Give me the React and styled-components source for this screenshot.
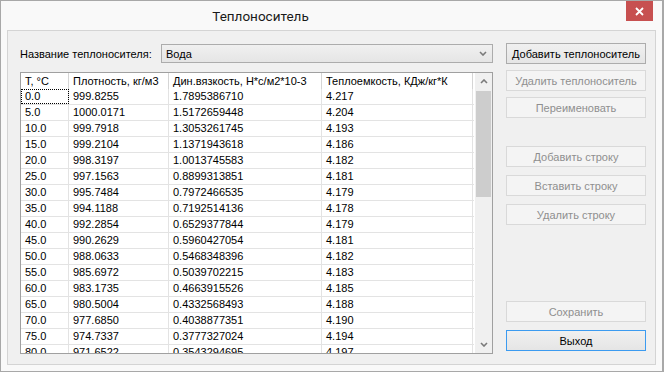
import React from "react";
import styled, { createGlobalStyle } from "styled-components";

const GlobalStyle = createGlobalStyle`
  html, body {
    margin: 0;
    padding: 0;
    background: #ffffff;
  }
  body {
    font-family: "Liberation Sans", Arial, sans-serif;
  }
`;

const columns = [
  { label: "T, °C", width: 48 },
  { label: "Плотность, кг/м3", width: 100 },
  { label: "Дин.вязкость, Н*с/м2*10-3", width: 153 },
  { label: "Теплоемкость, КДж/кг*К", width: 151 },
];

const rows = [
  ["0.0", "999.8255", "1.7895386710", "4.217"],
  ["5.0", "1000.0171", "1.5172659448", "4.204"],
  ["10.0", "999.7918", "1.3053261745", "4.193"],
  ["15.0", "999.2104", "1.1371943618", "4.186"],
  ["20.0", "998.3197", "1.0013745583", "4.182"],
  ["25.0", "997.1563", "0.8899313851", "4.181"],
  ["30.0", "995.7484", "0.7972466535", "4.179"],
  ["35.0", "994.1188", "0.7192514136", "4.178"],
  ["40.0", "992.2854", "0.6529377844", "4.179"],
  ["45.0", "990.2629", "0.5960427054", "4.181"],
  ["50.0", "988.0633", "0.5468348396", "4.182"],
  ["55.0", "985.6972", "0.5039702215", "4.183"],
  ["60.0", "983.1735", "0.4663915526", "4.185"],
  ["65.0", "980.5004", "0.4332568493", "4.188"],
  ["70.0", "977.6850", "0.4038877351", "4.190"],
  ["75.0", "974.7337", "0.3777327024", "4.194"],
  ["80.0", "971.6522", "0.3543294695", "4.197"],
];

const gridTemplate = columns.map((c) => `${c.width}px`).join(" ");

const Chevron = ({ up }) => (
  <svg width="8" height="5" viewBox="0 0 8 5">
    <polyline
      points={up ? "1,4 4,1 7,4" : "1,1 4,4 7,1"}
      fill="none"
      stroke="#7a7a7a"
      strokeWidth="1.6"
    />
  </svg>
);

const App = () => {
  return (
    <>
      <GlobalStyle />
      <Window>
        <TitleBar>
          <Title>Теплоноситель</Title>
          <CloseButton>
            <svg width="9" height="9" viewBox="0 0 9 9">
              <path d="M1 1 L8 8 M8 1 L1 8" stroke="#fff" strokeWidth="1.8" />
            </svg>
          </CloseButton>
        </TitleBar>
        <Client>
          <Main>
            <NameRow>
              <Label>Название теплоносителя:</Label>
              <Combo>
                <span>Вода</span>
                <Chevron />
              </Combo>
            </NameRow>
            <Table>
              <Grid>
                <HeaderRow>
                  {columns.map((c) => (
                    <HeaderCell key={c.label}>{c.label}</HeaderCell>
                  ))}
                </HeaderRow>
                {rows.map((r, i) => (
                  <Row key={r[0]}>
                    {r.map((v, j) => (
                      <Cell key={j} $focused={i === 0 && j === 0}>
                        {v}
                      </Cell>
                    ))}
                  </Row>
                ))}
              </Grid>
              <ScrollBar>
                <ArrowBox>
                  <Chevron up />
                </ArrowBox>
                <Thumb />
                <Track />
                <ArrowBox>
                  <Chevron />
                </ArrowBox>
              </ScrollBar>
            </Table>
          </Main>
          <Side>
            <ButtonGroup $gap={6}>
              <Button>Добавить теплоноситель</Button>
              <Button disabled>Удалить теплоноситель</Button>
              <Button disabled>Переименовать</Button>
            </ButtonGroup>
            <ButtonGroup $gap={8} $mt={28}>
              <Button disabled>Добавить строку</Button>
              <Button disabled>Вставить строку</Button>
              <Button disabled>Удалить строку</Button>
            </ButtonGroup>
            <ButtonGroup $gap={8} $mt="auto">
              <Button disabled>Сохранить</Button>
              <Button $default>Выход</Button>
            </ButtonGroup>
          </Side>
        </Client>
      </Window>
    </>
  );
};

export default App;

const Window = styled.div`
  width: 664px;
  height: 372px;
  box-sizing: border-box;
  border: 1px solid #a8a8a8;
  border-right-width: 2px;
  background: #f9f9f9;
  display: flex;
  flex-direction: column;
`;

const TitleBar = styled.div`
  height: 29px;
  display: flex;
  align-items: flex-start;
  flex-shrink: 0;
`;

const Title = styled.div`
  flex: 1;
  padding-right: 106px;
  height: 29px;
  display: flex;
  align-items: center;
  justify-content: center;
  font-family: Roboto, "Noto Sans", sans-serif;
  font-size: 13.5px;
  color: #1a1a1a;
`;

const CloseButton = styled.div`
  width: 27px;
  height: 20px;
  margin-right: 9px;
  background: #c75050;
  display: flex;
  align-items: center;
  justify-content: center;
`;

const Client = styled.div`
  flex: 1;
  margin: 0 6px 6px 6px;
  border: 1px solid #d4d4d4;
  background: #f0f0f0;
  display: flex;
  padding: 12px 9px 10px 12px;
  gap: 13px;
  min-height: 0;
`;

const Main = styled.div`
  flex: 1;
  display: flex;
  flex-direction: column;
  min-width: 0;
`;

const NameRow = styled.div`
  height: 21px;
  display: flex;
  align-items: center;
  margin-bottom: 8px;
`;

const Label = styled.span`
  width: 141px;
  font-size: 11px;
  color: #000;
`;

const Combo = styled.div`
  flex: 1;
  height: 19px;
  box-sizing: border-box;
  border: 1px solid #acacac;
  background: linear-gradient(#f0f0f0, #e5e5e5);
  display: flex;
  align-items: center;
  justify-content: space-between;
  padding: 0 5px 0 4px;
  font-size: 11px;
  color: #000;
`;

const Table = styled.div`
  flex: 1;
  border: 1px solid #a0a0a0;
  background: #ffffff;
  display: flex;
  overflow: hidden;
  min-height: 0;
`;

const Grid = styled.div`
  flex: 1;
  overflow: hidden;
`;

const HeaderRow = styled.div`
  display: grid;
  grid-template-columns: ${gridTemplate};
  height: 16px;
`;

const HeaderCell = styled.div`
  border-right: 1px solid #d5d5d5;
  padding-left: 4px;
  font-size: 11px;
  line-height: 16px;
  white-space: nowrap;
  overflow: hidden;
  color: #000;
`;

const Row = styled.div`
  display: grid;
  grid-template-columns: ${gridTemplate};
  height: 16px;
  box-sizing: border-box;
  border-bottom: 1px solid #e3e3e3;
`;

const Cell = styled.div`
  border-right: 1px solid #e3e3e3;
  padding-left: 4px;
  font-size: 11px;
  line-height: 15px;
  white-space: nowrap;
  color: #000;
  outline: ${(p) => (p.$focused ? "1px dotted #000" : "none")};
  outline-offset: -1px;
`;

const ScrollBar = styled.div`
  width: 17px;
  background: #f0f0f0;
  display: flex;
  flex-direction: column;
  margin-left: 1px;
`;

const ArrowBox = styled.div`
  height: 17px;
  display: flex;
  align-items: center;
  justify-content: center;
  flex-shrink: 0;
`;

const Thumb = styled.div`
  height: 106px;
  margin: 1px 1px 0 1px;
  background: #cdcdcd;
`;

const Track = styled.div`
  flex: 1;
`;

const Side = styled.div`
  width: 140px;
  display: flex;
  flex-direction: column;
  padding-bottom: 3px;
`;

const ButtonGroup = styled.div`
  display: flex;
  flex-direction: column;
  gap: ${(p) => p.$gap}px;
  margin-top: ${(p) => (p.$mt === "auto" ? "auto" : `${p.$mt || 0}px`)};
`;

const Button = styled.button`
  height: 21px;
  box-sizing: border-box;
  padding: 0;
  font-family: "Liberation Sans", Arial, sans-serif;
  font-size: 11px;
  border: 1px solid ${(p) => (p.$default ? "#3c9bf0" : "#acacac")};
  background: linear-gradient(#f0f0f0, #e5e5e5);
  color: #000;

  &:disabled {
    border-color: #d9d9d9;
    background: #f4f4f4;
    color: #8f8f8f;
  }
`;
